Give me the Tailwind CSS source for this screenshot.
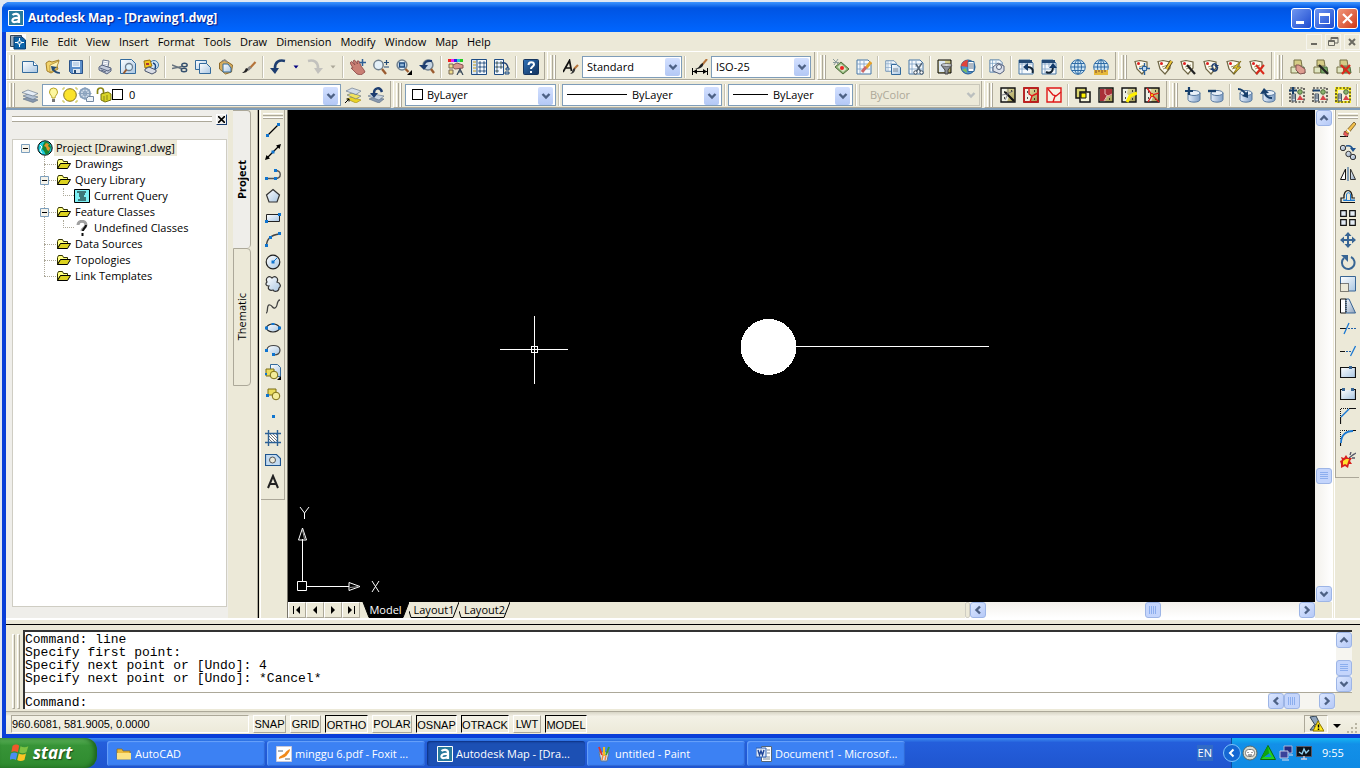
<!DOCTYPE html>
<html lang="en">
<head>
<meta charset="utf-8">
<title>Autodesk Map - [Drawing1.dwg]</title>
<script src="https://cdn.jsdelivr.net/npm/@tailwindcss/browser@4"></script>
</head>
<body class="h-screen overflow-hidden bg-[#ece9d8] font-['Open_Sans','Noto_Sans',sans-serif] text-[11px] leading-4 text-black">
<svg class="absolute size-0" aria-hidden="true">
<defs>
<linearGradient id="g" x1="0" y1="0" x2="1" y2="1"><stop offset="0" stop-color="#fff"/><stop offset="1" stop-color="#a9c6e2"/></linearGradient>
<linearGradient id="gs" x1="0" y1="0" x2="1" y2="1"><stop offset="0" stop-color="#f4f8fc"/><stop offset="1" stop-color="#8aa0bc"/></linearGradient>
<linearGradient id="gy" x1="0" y1="0" x2="1" y2="1"><stop offset="0" stop-color="#f5f0b8"/><stop offset="1" stop-color="#a09850"/></linearGradient>
<linearGradient id="gb" x1="0" y1="0" x2="1" y2="1"><stop offset="0" stop-color="#2f72b8"/><stop offset="1" stop-color="#12315c"/></linearGradient>
<linearGradient id="gdb" x1="0" y1="0" x2="1" y2="0"><stop offset="0" stop-color="#e4eefa"/><stop offset="1" stop-color="#7f9fc6"/></linearGradient>
</defs>
<symbol id="new" viewBox="0 0 16 16"><path d="M.5 2.500h11l4 4v7H.5z" fill="url(#g)" stroke="#336a9c"/><path d="M11.500 2.500v4h4" fill="#fff" stroke="#336a9c"/></symbol>
<symbol id="open" viewBox="0 0 16 16"><path d="M1 4l3-2 3 1 7-2-2 6 1 3-7 4-4-2z" fill="#f2d36a" stroke="#a6802a"/><path d="M5 6l9-4-3 8-6 3z" fill="#fff3b5" stroke="#a6802a" stroke-width=".7"/><path d="M8 9c1 4 3 5 7 5" stroke="#234a76" stroke-width="1.700" fill="none"/><path d="M6 7l6 1-5 4z" fill="#234a76"/></symbol>
<symbol id="save" viewBox="0 0 16 16"><path d="M1.500 1.500h13v13h-11l-2-2z" fill="#5c8fca" stroke="#2a5288"/><path d="M4 2h8v6H4z" fill="#e9f2fb"/><path d="M5 4h6M5 6h6" stroke="#9db8d6"/><path d="M5 10h7v4H5z" fill="#dce6f0"/><path d="M6 11h2v3H6z" fill="#234a76"/></symbol>
<symbol id="print" viewBox="0 0 16 16"><path d="M5 7l1-6 6 1-1 6z" fill="#fff" stroke="#66748e"/><path d="M2 8l3-2 9 3v3l-4 3-8-4z" fill="#c3cbdb" stroke="#56627e"/><path d="M3 9l8 3 3-2M4 11l5 2" stroke="#56627e" fill="none"/><path d="M6 3l5 1M6 5l5 1" stroke="#a7b2c6" stroke-width=".7"/></symbol>
<symbol id="preview" viewBox="0 0 16 16"><path d="M.5.500h11l4 4v10H.5z" fill="url(#g)" stroke="#336a9c"/><circle cx="9" cy="8" r="3.500" fill="#dff1fb" stroke="#6a7c90" stroke-width="1.300"/><path d="M6.500 10.500l-3 4" stroke="#9a5b2f" stroke-width="2"/></symbol>
<symbol id="publish" viewBox="0 0 16 16"><circle cx="11" cy="6" r="4.500" fill="#cfe5f4" stroke="#3c77a8"/><path d="M1 2l6-1 2 6-7 2z" fill="#f1c61e" stroke="#9a7411"/><path d="M3 4h3v2H3z" fill="#a33"/><path d="M2 10l4-2 7 3v2l-4 2-7-3z" fill="#d8dce4" stroke="#4a556d"/><path d="M10 4c3 1 3 3 2 6" stroke="#1a437c" fill="none" stroke-width="1.500"/></symbol>
<symbol id="cut" viewBox="0 0 16 16"><path d="M0 6l10 4M0 9.500l10-2" stroke="#66727e" stroke-width="1.400"/><ellipse cx="12.500" cy="6" rx="2.700" ry="1.800" fill="none" stroke="#35506e" stroke-width="1.400"/><ellipse cx="12" cy="11" rx="2.700" ry="1.800" fill="none" stroke="#35506e" stroke-width="1.400"/></symbol>
<symbol id="copy" viewBox="0 0 16 16"><path d="M.5 1.500h11v9H.5z" fill="url(#g)" stroke="#336a9c"/><path d="M4.500 4.500h7l4 4v6h-11z" fill="url(#g)" stroke="#336a9c"/></symbol>
<symbol id="paste" viewBox="0 0 16 16"><path d="M1.500 4l5-3 8 5-1 7-6 2-6-5z" fill="#d6ad5f" stroke="#906a27"/><path d="M5 5h5l3 4v4H5z" fill="url(#g)" stroke="#336a9c"/><path d="M4 2l3-1 2 2" stroke="#888" stroke-width="1.500" fill="none"/></symbol>
<symbol id="brush" viewBox="0 0 16 16"><path d="M14.500 3L9 9" stroke="#b57339" stroke-width="2.200"/><path d="M9.500 8l-3 3" stroke="#888" stroke-width="3"/><path d="M7 10c0 3-3 4-6 4 2-1 3-3 4-5z" fill="#222"/></symbol>
<symbol id="undo" viewBox="0 0 16 16"><path d="M15 2C9 .500 5 3 5 9" stroke="#1d3d70" stroke-width="2.600" fill="none"/><path d="M0 9h9l-4 6z" fill="#1d3d70"/></symbol>
<symbol id="redo" viewBox="0 0 16 16"><path d="M1 2c6-1.500 10 1 10 7" stroke="#c2c1bd" stroke-width="2.600" fill="none"/><path d="M7 9h9l-5 6z" fill="#c2c1bd"/></symbol>
<symbol id="dn" viewBox="0 0 16 16"><path d="M5.500 6.500h5l-2.500 3z" fill="#000080"/></symbol>
<symbol id="dng" viewBox="0 0 16 16"><path d="M5.500 6.500h5l-2.500 3z" fill="#aca899"/></symbol>
<symbol id="pan" viewBox="0 0 16 16"><path d="M0 4l1.500-1.500L5 6 3 2l1.500-1 3 4-.5-3 2 0 2 5 3 4 1 2-4 3-4-1-6-6 2 0z" fill="#c97f74" stroke="#844" stroke-width=".8"/><path d="M12.500 0v7M9.500 3.500h6.500" stroke="#2e5f96" stroke-width="1.500"/></symbol>
<symbol id="zoom" viewBox="0 0 16 16"><circle cx="5.500" cy="6" r="4.700" fill="#e4f0f8" stroke="#71808e" stroke-width="1.500"/><path d="M9 10l4 5" stroke="#9a5b2f" stroke-width="2.300"/><path d="M13.500 1v5M11 3.500h5M11 8h5" stroke="#234a76" stroke-width="1.200"/></symbol>
<symbol id="zoomw" viewBox="0 0 16 16"><circle cx="6" cy="6" r="4.900" fill="#e4f0f8" stroke="#71808e" stroke-width="1.500"/><path d="M3.500 4h5v4h-5z" fill="#8db4d8" stroke="#1c4a80" stroke-width="1.300"/><path d="M9.500 10l3 3" stroke="#9a5b2f" stroke-width="2.300"/><path d="M16 11v5h-5z"/></symbol>
<symbol id="zoomp" viewBox="0 0 16 16"><circle cx="9" cy="6" r="4.900" fill="#c7d6e4" stroke="#71808e" stroke-width="1.500"/><path d="M12 10l3 4" stroke="#9a5b2f" stroke-width="2.300"/><path d="M13 2c-6-1-8 2-8 5" stroke="#1d3d70" stroke-width="2.200" fill="none"/><path d="M0 6h9l-4 5z" fill="#1d3d70"/></symbol>
<symbol id="props" viewBox="0 0 16 16"><path d="M0 0h3v3H0z" fill="#e22"/><path d="M3 0h3v3H3z" fill="#e2e"/><path d="M6 0h3v3H6z" fill="#22e"/><path d="M9 0h3v3H9z" fill="#2cc"/><path d="M12 0h3v3h-3z" fill="#2c2"/><path d="M3 7l6-3 6 2v3l-8 1z" fill="#d9988c" stroke="#855"/><path d="M1 5h4v4H1zM1 11h4v4H1z" fill="#eedc8c" stroke="#765"/><path d="M9 16l3-6 3 6M10 13h4" stroke="#345" stroke-width="1.200" fill="none"/></symbol>
<symbol id="dc" viewBox="0 0 16 16"><path d="M.5.500h15v15H.5z" fill="#f4f8fc" stroke="#1e4c84"/><path d="M1 1h5v14H1z" fill="#dbe7f3"/><path d="M6 1v14" stroke="#1e4c84"/><path d="M2 3h3M2 6h3M2 9h3M2 12h3" stroke="#c79c1a"/><path d="M8 3h2v2H8zM12 3h2v2h-2zM8 7h2v2H8zM12 7h2v2h-2zM8 11h2v2H8zM12 11h2v2h-2z" fill="#bcd3ea" stroke="#234a76" stroke-width=".8"/></symbol>
<symbol id="tp" viewBox="0 0 16 16"><path d="M.5.500h9v15h-9z" fill="#f4f8fc" stroke="#1e4c84"/><path d="M2 3h2v2H2zM2 7h2v2H2zM2 11h2v2H2zM6 3h2v2H6zM6 7h2v2H6z" fill="#e8dc8a" stroke="#234a76" stroke-width=".8"/><path d="M8 4c4-1 6 2 6 6" stroke="#1d3d70" stroke-width="1.500" fill="none"/><path d="M12 9h3v2h-3zM11 13h4v2h-4z" fill="#bcd3ea" stroke="#234a76"/></symbol>
<symbol id="help" viewBox="0 0 16 16"><rect x=".5" y=".5" width="15" height="15" rx="1" fill="url(#gb)" stroke="#16355e"/><path d="M5.500 6c0-4 5.500-3.500 5.500-.5 0 2-3 2-3 4.500M8 12v2" stroke="#fff" stroke-width="2" fill="none"/></symbol>
<symbol id="tstyle" viewBox="0 0 16 16"><path d="M0 13L6.500 1.500l2 10.500M2.500 9H8" stroke="#111" stroke-width="1.700" fill="none"/><path d="M15 6l-4 4" stroke="#b57339" stroke-width="2.200"/><path d="M12 9c1 3-2 6-5 6 2-1 2-3 3-5z" fill="#333"/></symbol>
<symbol id="dstyle" viewBox="0 0 16 16"><path d="M.5 9v7M15.500 9v7M1 12.500h14" stroke="#000"/><path d="M1 12.500l4-2.500v5zM15 12.500l-4-2.500v5z"/><path d="M15 0l-5 6" stroke="#b57339" stroke-width="2"/><path d="M11 4c1 4-3 6-8 6 4-1 4-3 6-5z" fill="#222"/></symbol>
<symbol id="layers" viewBox="0 0 16 16"><path d="M1 12l5-2 10 3-5 2.500z" fill="#8798ae" stroke="#5b6b83" stroke-width=".6"/><path d="M1 9l5-2 10 3-5 2.500z" fill="#b6c5d6" stroke="#5b6b83" stroke-width=".6"/><path d="M0 5.500L6 3l10 3.500L11 9z" fill="#e5edf5" stroke="#5b6b83" stroke-width=".6"/></symbol>
<symbol id="laycur" viewBox="0 0 16 16"><path d="M2 12l5-2 9 3-5 3z" fill="#ead326" stroke="#9d8712" stroke-width=".6"/><path d="M2 8l5-2 9 3-5 3z" fill="#f0e260" stroke="#5b6b83" stroke-width=".6"/><path d="M1 4l6-3 9 3-5 3.500z" fill="#d3dde9" stroke="#5b6b83" stroke-width=".6"/><path d="M0 16l4-4M1.500 12H4v2.500" stroke="#000" fill="none"/></symbol>
<symbol id="layprev" viewBox="0 0 16 16"><path d="M1 12l5-2 10 2-5 4z" fill="#8798ae" stroke="#5b6b83" stroke-width=".6"/><path d="M0 9l5-2 11 2-5 4z" fill="#c9d5e2" stroke="#5b6b83" stroke-width=".6"/><path d="M14 5c-2-6-8-4-8 1" stroke="#1d3d70" stroke-width="2.400" fill="none"/><path d="M2 6h8l-4 5z" fill="#1d3d70"/></symbol>
<symbol id="bulb" viewBox="0 0 16 16"><path d="M6 11c0-3-2.500-3-2.500-6a4 4 0 018 0c0 3-2.500 3-2.500 6z" fill="#fdf7a0" stroke="#b7a425"/><path d="M6 12h3v3H6z" fill="#777"/></symbol>
<symbol id="sun" viewBox="0 0 16 16"><path d="M1 1h2M13 1h2M1 15h2M13 15h2M1 1v2M15 1v2M1 13v2M15 13v2" stroke="#c7c04a"/><circle cx="8" cy="8" r="6.300" fill="#fbe32c" stroke="#87731f"/></symbol>
<symbol id="vp" viewBox="0 0 16 16"><circle cx="7" cy="6.500" r="5" fill="#d4dfec" stroke="#8aa2bd" stroke-width="2"/><circle cx="7" cy="6.500" r="2" fill="none" stroke="#8aa2bd"/><path d="M7 0v13M.5 6.500h13M2.500 2l9 9M11.500 2l-9 9" stroke="#8aa2bd"/><path d="M10.500 9.500h5v5h-7v-3z" fill="#eef3f8" stroke="#7288a2"/></symbol>
<symbol id="lock" viewBox="0 0 16 16"><path d="M1.500 7V4c0-4 6-4 6 0v4" stroke="#8b8714" stroke-width="1.700" fill="none"/><path d="M5 7l7-2 3 2v6l-6 2-4-2z" fill="#d8d428" stroke="#77740d"/><path d="M8 9v5M11 8v5" stroke="#8b8714"/></symbol>
<!-- map sheet tools -->
<symbol id="sheet" viewBox="0 0 16 16"><path d="M1 1h11l3 3v11H1z" fill="#f6fafd" stroke="#4776a6"/><path d="M4 1v14M1 5h13M1 10h13M8 2v6" stroke="#7ba0c4" stroke-width=".8"/></symbol>
<symbol id="m1" viewBox="0 0 16 16"><path d="M2 8l6-5 8 7-6 5z" fill="#8fb579" stroke="#4d6b3b"/><path d="M4.500 8L8 5l5.500 5-3.500 3z" fill="#dce8c6"/><circle cx="9" cy="9" r="2" fill="#e22"/><path d="M0 0l5 5M5 0L1 6M0 3.500h6" stroke="#8a9a9a"/></symbol>
<symbol id="m2" viewBox="0 0 16 16"><use href="#sheet"/><path d="M15 3l-5 6" stroke="#e3a12b" stroke-width="3"/><path d="M10 8l-4 5" stroke="#c66" stroke-width="3"/></symbol>
<symbol id="m3" viewBox="0 0 16 16"><use href="#sheet" width="12" height="14"/><path d="M6.500 5.500h5l4 3v7h-9z" fill="url(#g)" stroke="#336a9c"/><path d="M8 10h5M8 12h5" stroke="#789"/></symbol>
<symbol id="m4" viewBox="0 0 16 16"><use href="#sheet"/><path d="M8 5l5 8M14 4L8 13" stroke="#567" stroke-width="1.500"/><circle cx="7.500" cy="13.500" r="1.700" fill="#fff" stroke="#345"/><circle cx="13.500" cy="13.500" r="1.700" fill="#fff" stroke="#345"/></symbol>
<symbol id="m5" viewBox="0 0 16 16"><path d="M1 1h13v13H1z" fill="url(#gy)" stroke="#000"/><path d="M2 2h6v11H2z" fill="#dce8f4"/><path d="M4 6h11l-4 5v4H8v-4z" fill="#8b9098" stroke="#444"/><ellipse cx="9.500" cy="6" rx="5" ry="1.500" fill="#d4d8de" stroke="#444" stroke-width=".7"/></symbol>
<symbol id="m6" viewBox="0 0 16 16"><circle cx="8" cy="8" r="7" fill="#4d93cf" stroke="#25588f"/><path d="M8 1a7 7 0 00-7 6l7 1z" fill="#e2423a"/><path d="M2 11l4-2 1 5z" fill="#7cbd5a"/><path d="M8 2.500h6v10H8z" fill="#fff" stroke="#336a9c"/><path d="M9 5h4M9 7h4M9 9h4" stroke="#678"/></symbol>
<symbol id="m7" viewBox="0 0 16 16"><use href="#sheet" width="14" height="14"/><path d="M4 8l5-4 6 3v5l-4 3-7-3z" fill="#dce1ea" stroke="#56627e"/><circle cx="10" cy="8" r="2.500" fill="#eef3f8" stroke="#56627e"/></symbol>
<symbol id="m8" viewBox="0 0 16 16"><use href="#sheet"/><path d="M1 1h13v3H1z" fill="#234a76"/><path d="M14.500 14c1-4-1-6-5-6" stroke="#123" stroke-width="2" fill="none"/><path d="M10 4v8L5 8z" fill="#123a6a"/></symbol>
<symbol id="m9" viewBox="0 0 16 16"><use href="#sheet"/><path d="M1 1h13v3H1z" fill="#234a76"/><path d="M5 13c4 2 7 0 7-5" stroke="#123" stroke-width="2" fill="none"/><path d="M8 9h8l-4-5z" fill="#123a6a"/></symbol>
<symbol id="globe" viewBox="0 0 16 16"><circle cx="8" cy="8" r="7.300" fill="#cfe6f4" stroke="#2e6ca6"/><ellipse cx="8" cy="8" rx="3.500" ry="7" fill="none" stroke="#2e6ca6"/><path d="M8 1v14M1 8h14M2 4.500h12M2 11.500h12" stroke="#2e6ca6"/></symbol>
<symbol id="globe2" viewBox="0 0 16 16"><use href="#globe"/><path d="M1 11h14v5H1z" fill="#e6b93b"/><path d="M3 11v3M6 11v2M9 11v3M12 11v2" stroke="#743"/></symbol>
<symbol id="tag" viewBox="0 0 16 16"><path d="M1 2.500l5-1 7 1.500v6l-5 6-5-5z" fill="#fdfbee" stroke="#6d6544" stroke-width="1.200"/><circle cx="4.500" cy="4.500" r="1.500" fill="#e02020"/><path d="M5 8l6-2M6 10l5-2" stroke="#9d9670"/></symbol>
<symbol id="t1" viewBox="0 0 16 16"><use href="#tag"/><path d="M10.500 4v12M5 9.500h11" stroke="#2a629c" stroke-width="1.400"/><path d="M8.500 7.500h4v4h-4z" fill="#bcd7ef" stroke="#2a629c"/></symbol>
<symbol id="t2" viewBox="0 0 16 16"><use href="#tag"/><path d="M14.500 2l-5 8" stroke="#493b16" stroke-width="3.500"/><path d="M14.500 2l-5 8" stroke="#ecc63a" stroke-width="2"/></symbol>
<symbol id="t3" viewBox="0 0 16 16"><use href="#tag"/><path d="M7 6l8 9" stroke="#222" stroke-width="2.200"/></symbol>
<symbol id="t4" viewBox="0 0 16 16"><use href="#tag"/><path d="M9 8c0-4 4.500-4 4.500-1M14.500 8c0 5-5 5-5 2" stroke="#1d3d70" stroke-width="1.500" fill="none"/><path d="M11 6h5l-2.500 3zM7 11h5L9.500 8z" fill="#1d3d70"/></symbol>
<symbol id="t5" viewBox="0 0 16 16"><use href="#tag"/><path d="M15 2L7 9h4l-4 6 8-7h-4z" fill="#f7d730" stroke="#7c6a12" stroke-width=".8"/></symbol>
<symbol id="t6" viewBox="0 0 16 16"><use href="#tag"/><path d="M7 6l8 9M15 6l-8 9" stroke="#da2a1c" stroke-width="2"/></symbol>
<symbol id="cls" viewBox="0 0 16 16"><path d="M4 1h7l1 6H4z" fill="#d5cc86" stroke="#777044"/><path d="M1 8h6.500v6H1z" fill="#dfe5c0" stroke="#777044"/><path d="M8 8h6l1 6H8z" fill="#78a867" stroke="#4d6b3b"/></symbol>
<symbol id="c1" viewBox="0 0 16 16"><use href="#cls"/><path d="M6 6h3l6 4v4l-5 1-4-4z" fill="#dd9d90" stroke="#855"/></symbol>
<symbol id="c2" viewBox="0 0 16 16"><use href="#cls"/><path d="M6 6l9 9" stroke="#222" stroke-width="2.200"/></symbol>
<symbol id="c3" viewBox="0 0 16 16"><use href="#cls"/><path d="M5 6l9 9M14 6l-8 9" stroke="#da2a1c" stroke-width="2.200"/></symbol>
<!-- topology tools -->
<symbol id="tb" viewBox="0 0 16 16"><path d="M1 1h14v14H1z" fill="url(#gy)"/><path d="M1 1h6l-1 6 3 2-2 6H1z" fill="#eef0e4"/><path d="M1 1h14v14H1z" fill="none" stroke="#111" stroke-width="1.400"/><path d="M4 5h1M11 4h1M11 12h1M4 11h1" stroke="#111" stroke-width="1.500"/></symbol>
<symbol id="p1" viewBox="0 0 16 16"><use href="#tb"/><path d="M5 5l9 9" stroke="#111" stroke-width="2.200"/><path d="M2 8l5-1 6-3M8 2v5l-3 6" stroke="#667" stroke-width=".8" fill="none"/></symbol>
<symbol id="p2" viewBox="0 0 16 16"><use href="#tb"/><path d="M1 1h14v14H1z" fill="none" stroke="#e01818" stroke-width="1.400"/><path d="M6 1v6l3 2 6-3M9 9l-2 6" stroke="#e01818" stroke-width="1.400" fill="none"/></symbol>
<symbol id="p3" viewBox="0 0 16 16"><path d="M1 1h14v14H1z" fill="#f6f2e4" stroke="#e01818" stroke-width="1.400"/><path d="M2 2l5 6 3 1 5-4M9 9l-2 6" stroke="#e01818" stroke-width="1.400" fill="none"/></symbol>
<symbol id="p4" viewBox="0 0 16 16"><path d="M1 1h10v10H1z" fill="#d9d46c" stroke="#111" stroke-width="1.500"/><path d="M5 5h10v10H5z" fill="#f7f5d9" stroke="#111" stroke-width="1.500"/><path d="M6 6h5v5H6z" fill="#fff200" stroke="#111"/></symbol>
<symbol id="p5" viewBox="0 0 16 16"><use href="#tb"/><path d="M2 2h12v6L9 9l-2 5H2z" fill="#a93038"/><path d="M7 2v5l3 2 4-2M9 9l-3 5" stroke="#e8b8b8" fill="none"/></symbol>
<symbol id="p6" viewBox="0 0 16 16"><use href="#tb"/><path d="M6 15l3-6 7-3" stroke="#ffef00" stroke-width="3" fill="none"/></symbol>
<symbol id="p7" viewBox="0 0 16 16"><use href="#tb"/><path d="M3 1l5 7 7-2M8 8l-4 7M8 8l7 7" stroke="#e01818" stroke-width="1.300" fill="none"/><circle cx="8" cy="8" r="1.500" fill="#ff0" stroke="#e01818"/></symbol>
<symbol id="db" viewBox="0 0 16 16"><path d="M3 6v6.500c0 3.500 12 3.500 12 0V6z" fill="url(#gdb)" stroke="#56789f"/><ellipse cx="9" cy="6" rx="6" ry="2.500" fill="#e9f1f9" stroke="#56789f"/></symbol>
<symbol id="d1" viewBox="0 0 16 16"><use href="#db"/><path d="M4 0v8M0 4h8" stroke="#173f6c" stroke-width="2.200"/></symbol>
<symbol id="d2" viewBox="0 0 16 16"><use href="#db"/><path d="M0 4h8" stroke="#173f6c" stroke-width="2.400"/></symbol>
<symbol id="d3" viewBox="0 0 16 16"><use href="#db"/><path d="M1 2c4 0 6 2 8 6" stroke="#173f6c" stroke-width="2" fill="none"/><path d="M5 9l6-5v7z" fill="#173f6c"/></symbol>
<symbol id="d4" viewBox="0 0 16 16"><use href="#db"/><path d="M12 11c-4 0-6-1-7-5" stroke="#173f6c" stroke-width="2" fill="none"/><path d="M0 7l4-6 5 5z" fill="#173f6c"/></symbol>
<symbol id="sel" viewBox="0 0 16 16"><path d="M1 1h14v14H1z" fill="none" stroke="#111" stroke-width="1.200" stroke-dasharray="2 1.500"/><circle cx="11" cy="5" r="2.300" fill="#8ab56f" stroke="#4d6b3b"/><path d="M8 13l3-5 3.500 5z" fill="#d8444a"/><path d="M3 7h3.500v7H3z" fill="#cfd9e4" stroke="#456"/><path d="M3 9h3M3 11h3" stroke="#456"/></symbol>
<symbol id="s1" viewBox="0 0 16 16"><use href="#sel"/><path d="M4 0v7M0 3.500h8" stroke="#173f6c" stroke-width="2"/></symbol>
<symbol id="s2" viewBox="0 0 16 16"><use href="#sel"/><path d="M1 3.500h7" stroke="#173f6c" stroke-width="2"/></symbol>
<symbol id="s3" viewBox="0 0 16 16"><path d="M0 0h16v16H0z" fill="#fff12a"/><path d="M3 3h11v11H3z" fill="#f4f0d8"/><use href="#sel"/></symbol>
<!-- draw tools -->
<symbol id="w1" viewBox="0 0 16 16"><path d="M2.500 13.500l11-11" stroke="#000" stroke-width="1.200"/><path d="M1 12h3v3H1zM12 1h3v3h-3z" fill="#0f75d0"/></symbol>
<symbol id="w2" viewBox="0 0 16 16"><path d="M1.500 14.500l13-13" stroke="#000" stroke-width="1.200"/><path d="M0 16l1.500-5 3.500 3.500zM16 0l-1.500 5L11 1.500z"/><path d="M6.500 6.500h3v3h-3z" fill="#0f75d0"/></symbol>
<symbol id="w3" viewBox="0 0 16 16"><path d="M1 12.500h9M10 12.500c7 0 7-8 0-8" stroke="#555" stroke-width="1.400" fill="none"/><path d="M0 11h3v3H0zM9 11h3v3H9zM9 3h3v3H9z" fill="#0f75d0"/></symbol>
<symbol id="w4" viewBox="0 0 16 16"><path d="M8 1.500L14.500 7 12 14H4L1.500 7z" fill="url(#g)" stroke="#333" stroke-width="1.200"/></symbol>
<symbol id="w5" viewBox="0 0 16 16"><path d="M1.500 4.500h13v7h-13z" fill="url(#g)" stroke="#222"/><path d="M0 10h3v3H0zM13 3h3v3h-3z" fill="#0f75d0"/></symbol>
<symbol id="w6" viewBox="0 0 16 16"><path d="M1.500 14c0-6 4-11 13-12" stroke="#444" stroke-width="1.400" fill="none"/><path d="M0 12h3v3H0zM4 4h3v3H4zM13 0h3v3h-3z" fill="#0f75d0"/></symbol>
<symbol id="w7" viewBox="0 0 16 16"><circle cx="8" cy="8" r="6.800" fill="url(#g)" stroke="#222" stroke-width="1.200"/><path d="M8 8l4-4" stroke="#0f75d0"/><path d="M6.500 6.500h3v3h-3z" fill="#0f75d0"/></symbol>
<symbol id="w8" viewBox="0 0 16 16"><path d="M2 6C0 2 4-1 7 2c3-3 7 0 5 4 4 1 4 5 2 6 0 4-5 4-6 2-3 1-6-1-4-4-3 0-4-2-2-4z" fill="url(#g)" stroke="#333" stroke-width="1.200"/></symbol>
<symbol id="w9" viewBox="0 0 16 16"><path d="M1 15c2 0 1-5 2-7s3-1 4.500 1 4 1 4.500-2 1-5 3-5" stroke="#444" stroke-width="1.300" fill="none"/></symbol>
<symbol id="w10" viewBox="0 0 16 16"><ellipse cx="8" cy="8" rx="6.500" ry="4" fill="url(#g)" stroke="#222" stroke-width="1.200"/><path d="M0 6.500h3v3H0zM13 6.500h3v3h-3zM6.500 3h3v2h-3z" fill="#0f75d0"/></symbol>
<symbol id="w11" viewBox="0 0 16 16"><path d="M2 8c0-6 13-6 13 0 0 3-2 5-6 5" fill="url(#g)" stroke="#444" stroke-width="1.200"/><path d="M0 7h3v3H0zM7 11h3v3H7z" fill="#0f75d0"/></symbol>
<symbol id="w12" viewBox="0 0 16 16"><path d="M5.500.500h7l3 3v9h-10z" fill="url(#g)" stroke="#336a9c"/><path d="M1 5h8v7H1z" fill="#eadb5c" stroke="#7a6c14"/><circle cx="9" cy="11" r="3.800" fill="#f4ec9a" stroke="#7a6c14"/><path d="M0 9h2v2H0z" fill="#0f75d0"/><path d="M16 12v4h-4z"/></symbol>
<symbol id="w13" viewBox="0 0 16 16"><path d="M3 3h8v6H3z" fill="#eadb5c" stroke="#7a6c14"/><circle cx="11" cy="10" r="3.800" fill="#f4ec9a" stroke="#7a6c14"/><path d="M1 8h3v3H1z" fill="#0f75d0"/></symbol>
<symbol id="w14" viewBox="0 0 16 16"><path d="M7 7h3v3H7z" fill="#0f75d0"/></symbol>
<symbol id="w15" viewBox="0 0 16 16"><path d="M4 4h9v9H4z" fill="#fff"/><path d="M4 9l4 4M4 6l7 7M5 4l8 8M8 4l5 5M11 4l2 2" stroke="#555" stroke-width=".8"/><path d="M0 3.500h16M0 12.500h16M3.500 0v16M12.500 0v16" stroke="#2b6096" stroke-width="1.400"/></symbol>
<symbol id="w16" viewBox="0 0 16 16"><path d="M.5 2.500h11l4 4v7H.5z" fill="#c4dbf0" stroke="#1e5590" stroke-width="1.200"/><circle cx="7.500" cy="8" r="3" fill="#ece9d8" stroke="#555"/></symbol>
<symbol id="w17" viewBox="0 0 16 16"><path d="M3 14L8 2l5 12M5 10h6" stroke="#222" stroke-width="2" fill="none"/></symbol>
<!-- modify tools -->
<symbol id="e1" viewBox="0 0 16 16"><path d="M0 14.500h8" stroke="#111"/><path d="M5 10l9-10 2 2-8 10z" fill="#f3c04c" stroke="#6b5020" stroke-width=".8"/><path d="M4.500 9l4 4-2 1.500-3-2z" fill="#ef5b5b" stroke="#733" stroke-width=".6"/><path d="M7 7.500l3 3" stroke="#fff" stroke-width="1.500"/></symbol>
<symbol id="e2" viewBox="0 0 16 16"><circle cx="3" cy="4" r="2.700" fill="url(#gs)" stroke="#333"/><circle cx="8.500" cy="10" r="2.700" fill="url(#gs)" stroke="#333"/><circle cx="13" cy="13" r="2.700" fill="url(#gs)" stroke="#333"/><path d="M6 2c4-1 6 0 7 4" stroke="#1f5490" stroke-width="1.600" fill="none"/><path d="M10 4h6l-3 4z" fill="#1f5490"/></symbol>
<symbol id="e3" viewBox="0 0 16 16"><path d="M5.500 3v10.500H.5z" fill="#fff" stroke="#111"/><path d="M10.500 3v10.500h5z" fill="url(#gs)" stroke="#333"/><path d="M8 1v14" stroke="#1f5490"/></symbol>
<symbol id="e4" viewBox="0 0 16 16"><path d="M15 14.500H1V10h3c-1-10 9-10 8 0h3" fill="none" stroke="#111" stroke-width="1.200"/><path d="M15 12.500H3.500M15 12h-4.500V7c0-3-4-3-4 0v5H3" stroke="#1a78d2" fill="none"/></symbol>
<symbol id="e5" viewBox="0 0 16 16"><path d="M.7.700h5.600v5.600H.7zM9.700.700h5.600v5.600H9.700zM.7 9.700h5.600v5.600H.7zM9.700 9.700h5.600v5.600H9.700z" fill="#e3ebf4" stroke="#111" stroke-width="1.200"/></symbol>
<symbol id="e6" viewBox="0 0 16 16"><path d="M8 1v14M1 8h14" stroke="#386594" stroke-width="2"/><path d="M8 0l3.500 4h-7zM8 16l3.500-4h-7zM0 8l4-3.500v7zM16 8l-4-3.500v7z" fill="#386594"/></symbol>
<symbol id="e7" viewBox="0 0 16 16"><path d="M4 4a6.300 6.300 0 107-1" stroke="#386594" stroke-width="2" fill="none"/><path d="M1 1h7v7z" fill="#386594"/></symbol>
<symbol id="e8" viewBox="0 0 16 16"><path d="M1 .500h14.500V15H1z" fill="url(#g)"/><path d="M.5 8V.500h15V15H9" fill="none" stroke="#386594"/><path d="M.5 7.500h8v8h-8z" fill="#ece9d8" stroke="#111" stroke-dasharray="1 1"/></symbol>
<symbol id="e9" viewBox="0 0 16 16"><path d="M.5 1v14H6V1z" fill="#fff" stroke="#111"/><path d="M6 1v14h9.500L9 1z" fill="url(#gs)" stroke="#386594"/><path d="M6 1v14" stroke="#111" stroke-dasharray="1 1"/></symbol>
<symbol id="e10" viewBox="0 0 16 16"><path d="M0 8.500h6" stroke="#111"/><path d="M8 8.500h8" stroke="#1f60a8" stroke-dasharray="2 1"/><path d="M4 14l5-11" stroke="#1a78d2" stroke-width="1.300"/></symbol>
<symbol id="e11" viewBox="0 0 16 16"><path d="M0 9.500h5" stroke="#111"/><path d="M6 9.500h6" stroke="#1f60a8" stroke-dasharray="2 1"/><path d="M10.500 14l5-10" stroke="#1a78d2" stroke-width="1.300"/></symbol>
<symbol id="e12" viewBox="0 0 16 16"><path d="M.5 3.500h15v10H.5z" fill="url(#g)" stroke="#111" stroke-width="1.200"/><path d="M9 2h3v3H9z" fill="#386594"/></symbol>
<symbol id="e13" viewBox="0 0 16 16"><path d="M1 4h14v9H1z" fill="url(#g)"/><path d="M4 3.500H.5v10h15v-10H12" fill="none" stroke="#111" stroke-width="1.200"/><path d="M2 2h3v3H2zM11 2h3v3h-3z" fill="#386594"/></symbol>
<symbol id="e14" viewBox="0 0 16 16"><path d="M.5 16V9M9 .500h7" stroke="#111" stroke-width="1.200"/><path d="M.5 8V.500h8" stroke="#111" stroke-dasharray="1 1" fill="none"/><path d="M1 9l8-8" stroke="#1a78d2" stroke-width="1.500"/></symbol>
<symbol id="e15" viewBox="0 0 16 16"><path d="M.5 16v-3M12 .500h4" stroke="#111" stroke-width="1.200"/><path d="M.5 9V.500h8" stroke="#111" stroke-dasharray="1 1" fill="none"/><path d="M1 13C1 6 5 1 13 1" stroke="#1a78d2" stroke-width="1.800" fill="none"/></symbol>
<symbol id="e16" viewBox="0 0 16 16"><path d="M1 5l3 1 2-3 2 3 4 0-2 3 2 3-3 0-1 4-3-2-4 2 0-4-1-3 2-1z" fill="#d8201c"/><path d="M3 9l3-2 3 0-1 3-1 3-2-1-2 1z" fill="#ffe12e"/><path d="M9 6l5-4M12 6l3 0M10 3l1-3M13 3l3-2" stroke="#556" stroke-width="1.300"/></symbol>
<!-- tree, task bar and tray glyphs -->
<symbol id="folder" viewBox="0 0 15 12"><path d="M1.500 10.500v-7l1-2h4l1 2h4v2h-7z" fill="#ffff80" stroke="#333300"/><path d="M1.500 10.500l3-5h10l-3 5z" fill="#dcd220" stroke="#000"/></symbol>
<symbol id="world" viewBox="0 0 16 16"><circle cx="8" cy="8" r="7.200" fill="#1ccad8" stroke="#000"/><path d="M8 1l4 2 2 4-2 6-3 2-2-4-2-2 1-4z" fill="#1a8430"/><path d="M9 3l3 1-1 2 2 2-1 3-2-1-1-3-2-1z" fill="#e0942a"/><path d="M3 5l2 2-2 3 2 3" stroke="#fff" fill="none"/></symbol>
<symbol id="query" viewBox="0 0 16 14"><path d="M.5.500h15v13H.5z" fill="#7df0f5" stroke="#000"/><path d="M3 3h4M5 5h6M7 3h5M5 7h5M6 9h6M4 11h8" stroke="#000"/></symbol>
<symbol id="alogo" viewBox="0 0 16 16"><path d="M.5.500h15v15H.5z" fill="#287a9c" stroke="#fff"/><path d="M4.500 5c2-2 6.500-1.500 6.500 1.500V13M11 8C3 7 3 12.500 7 12c2 0 4-1 4-3" stroke="#fff" stroke-width="2.200" fill="none"/></symbol>
<symbol id="docicon" viewBox="0 0 16 16"><path d="M.5 1.500h11v11H.5z" fill="#9ab" stroke="#345"/><path d="M4 3h8l3.500 3v9H4z" fill="#0b63a8" stroke="#0a3c6e"/><path d="M9.500 4v9M5 8.500h9" stroke="#fff"/><path d="M8 7h3v3H8z" fill="#0b63a8" stroke="#fff" stroke-width=".8"/></symbol>
<symbol id="flag" viewBox="1 1 14.500 14"><path d="M3 2c2-1.500 4-1 5 0L7 7C5 6 3.500 6 2 7z" fill="#f0582b"/><path d="M9 2.500c2 1 4 1 6 0L13.500 7c-2 1-4 1-5.500 0z" fill="#7dc242"/><path d="M1.700 8C3.500 7 5 7 6.700 8L5.500 13c-1.500-1-3.500-1-5 0z" fill="#4a8df0"/><path d="M7.700 8c2 1 4 1 5.500 0L12 13c-2 1-4 1-5.500 0z" fill="#fbc524"/></symbol>
<symbol id="yfold" viewBox="0 0 16 16"><path d="M1 13V3h5l1 2h7v8z" fill="#e9b93b" stroke="#8a6914" stroke-width=".7"/><path d="M1 7h14v6.500H1z" fill="#fbe384"/></symbol>
<symbol id="foxit" viewBox="0 0 16 16"><path d="M.5.500h15v15H.5z" fill="#fff" stroke="#c8c8d8"/><path d="M3 13c-1-3 5-4 6-6s3-3 5-4c0 3-2 4-3 6s-5 3-8 4z" fill="#f08a1c"/><path d="M2 5h5M9 13h5" stroke="#567"/></symbol>
<symbol id="paint" viewBox="0 0 16 16"><path d="M3 6h10l-2 9H5z" fill="#dbe6f2" stroke="#678"/><path d="M6 9L3 1" stroke="#d33" stroke-width="2"/><path d="M8 10V1" stroke="#f0c020" stroke-width="2"/><path d="M10 9l3-8" stroke="#3a9b3a" stroke-width="2"/><path d="M6 14l1-5M9 14l1-5" stroke="#e84" stroke-width="1.500"/></symbol>
<symbol id="word" viewBox="0 0 16 16"><path d="M5.500.500h10v15h-10z" fill="#fff" stroke="#567"/><path d="M11 4h3M11 7h3M7 11h7M7 13h7" stroke="#789"/><path d="M0 2h10v9H0z" fill="#dfe9f8" stroke="#2a5fb4"/><path d="M2 4l1.500 5L5 5l1.500 4L8 4" stroke="#1c4498" stroke-width="1.400" fill="none"/></symbol>
<symbol id="y1" viewBox="0 0 16 16"><circle cx="8" cy="8" r="7" fill="#d8dcd0" stroke="#566"/><rect x="3.500" y="4.500" width="9" height="7" rx="3" fill="#fff" stroke="#777"/><path d="M6 7v1M10 7v1M6 10h4" stroke="#444"/></symbol>
<symbol id="y2" viewBox="0 0 16 16"><path d="M8 .5l7.500 14H.5z" fill="#22d022" stroke="#0b6a0b"/><path d="M8 6l3.500 6h-7z" fill="#0c8fd8"/><path d="M8 .5l1 8-8.500 6z" fill="#0ea30e"/></symbol>
<symbol id="y3" viewBox="0 0 16 16"><path d="M6 1h8v7H6z" fill="#232a80" stroke="#aab4d8"/><path d="M2 6h8v7H2z" fill="#39429a" stroke="#c2cae6"/><path d="M4 15h7M11 10h4" stroke="#dde"/></symbol>
<symbol id="y4" viewBox="0 0 16 16"><path d="M.5 1.500h15v10H.5z" fill="#0c1218" stroke="#556"/><path d="M3 7l3 2 2-5 2 4 3-3" stroke="#8fd0f0" stroke-width="1.400" fill="none"/><path d="M5 14h6M8 11v3" stroke="#ccd" stroke-width="1.500"/></symbol>
<symbol id="chevD" viewBox="0 0 16 16"><path d="M4.500 6L8 9.500 11.500 6" stroke="#4d6185" stroke-width="2.400" fill="none"/></symbol>
<symbol id="chevU" viewBox="0 0 16 16"><path d="M4.500 10L8 6.500l3.500 3.500" stroke="#4d6185" stroke-width="2.400" fill="none"/></symbol>
<symbol id="chevL" viewBox="0 0 16 16"><path d="M10 4.500L6.500 8l3.500 3.500" stroke="#4d6185" stroke-width="2.400" fill="none"/></symbol>
<symbol id="chevR" viewBox="0 0 16 16"><path d="M6 4.500L9.500 8 6 11.500" stroke="#4d6185" stroke-width="2.400" fill="none"/></symbol>
</svg>

<div class="flex h-full flex-col">
  <div class="flex min-h-0 flex-1 flex-col bg-[#dfe6f2] pt-[2px] pl-[2px]">
    <div class="flex min-h-0 flex-1 flex-col rounded-tl-lg bg-[#0a3fd8] pb-[4px]">
      <!-- title bar -->
      <header class="flex h-[30px] shrink-0 items-center rounded-tl-lg bg-linear-to-b from-[#3d95ff] via-[#0054e3] via-20% to-[#0066ff] pt-[2px] pr-[2px] pl-[6px]">
        <svg class="size-4"><use href="#alogo"/></svg>
        <h1 class="ml-1 flex-1 text-[12px] font-bold text-white [text-shadow:1px_1px_1px_#0a1883]">Autodesk Map - [Drawing1.dwg]</h1>
        <div class="flex gap-[2px]">
          <button aria-label="Minimize" class="flex size-[21px] items-end rounded-[3px] border border-white bg-linear-to-br from-[#6f95f0] to-[#1f49cf] p-1"><span class="block h-[3px] w-2 bg-white"></span></button>
          <button aria-label="Maximize" class="flex size-[21px] items-center justify-center rounded-[3px] border border-white bg-linear-to-br from-[#6f95f0] to-[#1f49cf]"><span class="block size-[11px] border border-t-[3px] border-white"></span></button>
          <button aria-label="Close" class="flex size-[21px] items-center justify-center rounded-[3px] border border-white bg-linear-to-br from-[#f0967a] to-[#cf3510]"><svg class="size-[13px]" viewBox="0 0 13 13"><path d="M2 2l9 9M11 2l-9 9" stroke="#fff" stroke-width="2.200"/></svg></button>
        </div>
      </header>

      <div class="ml-[4px] flex min-h-0 flex-1 flex-col bg-[#ece9d8]">
        <!-- menu -->
        <nav class="flex h-[20px] shrink-0 items-center border-b border-white pl-1" aria-label="Menu">
          <svg class="size-4 bg-white"><use href="#docicon"/></svg>
          <div id="menu" class="ml-[5px] flex flex-1"></div>
          <div class="flex gap-[3px]">
            <button aria-label="Minimize drawing" class="flex size-4 items-end border border-[#f6f5ee] p-1"><span class="block h-[2px] w-[6px] bg-[#6b6a62]"></span></button>
            <button aria-label="Restore drawing" class="flex size-4 items-center justify-center border border-[#f6f5ee]"><svg class="size-3" viewBox="0 0 12 12"><path d="M4 4V1.500h7V7H8M1.500 4.500h6v5h-6zM1.500 5.500h6M4 2.500h7" fill="none" stroke="#6b6a62"/></svg></button>
            <button aria-label="Close drawing" class="flex size-4 items-center justify-center border border-[#f6f5ee]"><svg class="size-2" viewBox="0 0 8 8"><path d="M1 1l6 6M7 1L1 7" stroke="#6b6a62" stroke-width="2"/></svg></button>
          </div>
        </nav>
        <!-- tool bars -->
        <div class="flex h-7 shrink-0 gap-[2px] overflow-hidden">
          <div data-bar="new open save | print preview publish | cut copy paste brush | undo dn redo dng | pan zoom zoomw zoomp | props dc tp | help" class="flex w-[539px] shrink-0 items-center border-r border-b border-l border-r-[#aca899] border-b-[#aca899] border-l-white pt-[2px]"></div>
          <div data-bar="tstyle" class="flex w-[268px] shrink-0 items-center border-r border-b border-l border-r-[#aca899] border-b-[#aca899] border-l-white pt-[2px]">
            <div class="relative h-[22px] w-[100px]"><select aria-label="Text style" class="h-full w-full appearance-none border border-[#7f9db9] bg-white pl-1"><option>Standard</option></select><span data-drop></span></div>
            <span class="mx-[2px] h-[22px] w-[2px] border-r border-l border-r-white border-l-[#c5c2b2]"></span>
            <button aria-label="Dimension style" class="flex w-[23px] justify-center"><svg class="size-4"><use href="#dstyle"/></svg></button>
            <div class="relative h-[22px] w-[100px]"><select aria-label="Dimension style name" class="h-full w-full appearance-none border border-[#7f9db9] bg-white pl-1"><option>ISO-25</option></select><span data-drop></span></div>
          </div>
          <div data-bar="m1 m2 | m3 m4 | m5 m6 | m7 | m8 m9 | globe globe2" class="flex shrink-0 items-center border-r border-b border-l border-r-[#aca899] border-b-[#aca899] border-l-white pt-[2px] pr-[3px]"></div>
          <div data-bar="t1 t2 t3 t4 t5 t6" class="flex shrink-0 items-center border-r border-b border-l border-r-[#aca899] border-b-[#aca899] border-l-white pt-[2px] pr-[3px]"></div>
          <div data-bar="c1 c2 c3 cls" class="flex shrink-0 items-center border-b border-l border-b-[#aca899] border-l-white pt-[2px]"></div>
        </div>
        <div class="flex h-7 shrink-0 gap-[2px] overflow-hidden border-t border-white">
          <div data-bar="layers" class="flex w-[385px] shrink-0 items-center border-r border-b border-l border-r-[#aca899] border-b-[#aca899] border-l-white pt-px">
            <div class="relative ml-px flex h-[22px] w-[299px] items-center border border-[#7f9db9] bg-white pl-[3px]">
              <svg class="size-4"><use href="#bulb"/></svg><svg class="size-4"><use href="#sun"/></svg><svg class="size-4"><use href="#vp"/></svg><svg class="ml-[2px] size-4"><use href="#lock"/></svg>
              <span class="block size-[11px] border border-black"></span>
              <select aria-label="Layer" class="h-full flex-1 appearance-none pl-[6px]"><option>0</option></select><span data-drop></span>
            </div>
            <button aria-label="Make layer current" class="flex w-[23px] justify-center"><svg class="size-4"><use href="#laycur"/></svg></button>
            <button aria-label="Layer previous" class="flex w-[23px] justify-center"><svg class="size-4"><use href="#layprev"/></svg></button>
          </div>
          <div data-bar="" class="flex w-[589px] shrink-0 items-center border-r border-b border-l border-r-[#aca899] border-b-[#aca899] border-l-white pt-px">
            <div class="relative flex h-[22px] w-[151px] items-center border border-[#7f9db9] bg-white pl-[6px]"><span class="block size-[11px] border border-black"></span><select aria-label="Color" class="h-full flex-1 appearance-none pl-1"><option>ByLayer</option></select><span data-drop></span></div>
            <span class="mx-[2px] h-[22px] w-[2px] border-r border-l border-r-white border-l-[#c5c2b2]"></span>
            <div class="relative flex h-[22px] w-[160px] items-center border border-[#7f9db9] bg-white pl-1"><span class="block h-px w-[60px] bg-black"></span><select aria-label="Linetype" class="h-full flex-1 appearance-none pl-[5px]"><option>ByLayer</option></select><span data-drop></span></div>
            <span class="mx-[2px] h-[22px] w-[2px] border-r border-l border-r-white border-l-[#c5c2b2]"></span>
            <div class="relative flex h-[22px] w-[125px] items-center border border-[#7f9db9] bg-white pl-1"><span class="block h-px w-[35px] bg-black"></span><select aria-label="Lineweight" class="h-full flex-1 appearance-none pl-[5px]"><option>ByLayer</option></select><span data-drop></span></div>
            <span class="mx-[2px] h-[22px] w-[2px] border-r border-l border-r-white border-l-[#c5c2b2]"></span>
            <div class="relative h-[22px] w-[121px]"><select disabled aria-label="Plot style" class="h-full w-full appearance-none border border-[#c9c7ba] pl-[10px] text-[#aca899] opacity-100"><option>ByColor</option></select><svg class="pointer-events-none absolute top-[3px] right-px size-4 opacity-30"><use href="#chevD"/></svg></div>
          </div>
          <div data-bar="p1 p2 p3 | p4 p5 p6 p7" class="flex shrink-0 items-center border-r border-b border-l border-r-[#aca899] border-b-[#aca899] border-l-white pt-px pr-[3px]"></div>
          <div data-bar="d1 d2 | d3 d4 | s1 s2 s3 |" class="flex shrink-0 items-center border-b border-l border-b-[#aca899] border-l-white pt-px"></div>
        </div>

        <!-- work area -->
        <div class="flex min-h-0 flex-1 border-t-2 border-b-2 border-t-[#7f9db9] border-b-white">
          <!-- project palette -->
          <aside class="flex w-[252px] shrink-0 border-r border-[#aca899]">
            <div class="flex w-[222px] flex-col bg-[#efeeea] pr-px pb-[11px] pl-[6px]">
              <div class="flex h-[29px] items-start gap-1 pt-[4px]">
                <span class="mt-[2px] block h-[6px] flex-1 border-t border-b border-[#aca899] bg-white"></span>
                <button aria-label="Close palette" class="flex size-[11px] items-center justify-center border border-white border-r-[#1a3c6e] border-b-[#1a3c6e]"><svg class="size-[7px]" viewBox="0 0 7 7"><path d="M0 0l7 7M7 0L0 7" stroke="#000" stroke-width="1.600"/></svg></button>
              </div>
              <ul id="tree" class="relative flex-1 border border-[#cfcdc3] bg-white"></ul>
            </div>
            <div class="flex flex-1 flex-col pr-[6px] pl-[5px]">
              <button class="flex h-[138px] items-center justify-center rounded-r border-t border-r border-[#aca899] bg-[#efeeea] font-bold"><span class="rotate-180 [writing-mode:vertical-rl]">Project</span></button>
              <button class="flex h-[138px] items-center justify-center rounded-r border border-[#aca899]"><span class="rotate-180 [writing-mode:vertical-rl]">Thematic</span></button>
            </div>
          </aside>
          <div class="w-[3px] shrink-0 border-r border-l border-r-white border-l-black"></div>
          <div class="w-[26px] shrink-0 pr-[2px]"><div data-col="w1 w2 w3 w4 w5 w6 w7 w8 w9 w10 w11 w12 w13 w14 w15 w16 w17" class="flex flex-col items-center border-r border-b border-[#aca899] pt-[3px] pb-[6px]"></div></div>
          <!-- drawing -->
          <main class="flex min-w-0 flex-1 flex-col border-l border-[#77746a]">
            <div class="flex min-h-0 flex-1">
              <div class="relative min-w-0 flex-1 bg-black">
                <svg class="size-full" shape-rendering="crispEdges">
                  <path d="M212 239.500h68M246.500 206v68" stroke="#fff"/><path d="M243.500 236.500h6v6h-6z" fill="none" stroke="#fff"/>
                  <circle cx="480.500" cy="237" r="28" fill="#fff"/><path d="M508 236.500h193" stroke="#fff"/>
                </svg>
                <svg class="absolute bottom-0 left-0 h-[110px] w-[110px]" viewBox="0 0 110 110"><path d="M14.500 47v42M19 94.500h42M9.500 89.500h9v9h-9zM14.500 36l-4 12h8zM72 94.500l-11-4v8z" fill="none" stroke="#fff"/><path d="M14.500 38l2 9M71 94.500l-9 1" stroke="#999"/><path d="M12 15l4.500 6L21 15M16.500 21v6M84 89l7 11M91 89l-7 11" fill="none" stroke="#fff"/></svg>
              </div>
              <div class="flex w-[17px] shrink-0 flex-col items-center justify-between bg-linear-to-r from-[#f3f1ec] to-white">
                <button data-sb="U" aria-label="Scroll up"></button>
                <span class="flex-[340]"></span><span data-thumb="v"></span><span class="flex-[101]"></span>
                <button data-sb="D" aria-label="Scroll down"></button>
              </div>
            </div>
            <div class="flex h-4 shrink-0 pr-[17px]">
              <div class="flex w-[73px]">
                <button aria-label="First layout" class="flex w-[18px] items-center justify-center border border-white border-r-[#aca899] border-b-[#aca899]"><svg class="size-[10px] shrink-0" viewBox="0 0 10 10"><path d="M8 1v8L4 5zM1 1h1v8H1z"/></svg></button>
                <button aria-label="Previous layout" class="flex w-[18px] items-center justify-center border border-white border-r-[#aca899] border-b-[#aca899]"><svg class="size-[10px] shrink-0" viewBox="0 0 10 10"><path d="M7 1v8L3 5z"/></svg></button>
                <button aria-label="Next layout" class="flex w-[18px] items-center justify-center border border-white border-r-[#aca899] border-b-[#aca899]"><svg class="size-[10px] shrink-0" viewBox="0 0 10 10"><path d="M3 1v8l4-4z"/></svg></button>
                <button aria-label="Last layout" class="flex w-[18px] items-center justify-center border border-white border-r-[#aca899] border-b-[#aca899]"><svg class="size-[10px] shrink-0" viewBox="0 0 10 10"><path d="M2 1v8l4-4zM8 1h1v8H8z"/></svg></button>
              </div>
              <button class="relative w-[48px] pl-px leading-[14px] text-white"><svg class="absolute inset-0 size-full" viewBox="0 0 48 16" preserveAspectRatio="none"><path d="M2 0l6 15.500h34L48 0z" stroke="#000"/></svg><span class="relative">Model</span></button>
              <button class="relative w-[50px] leading-[14px]"><svg class="absolute inset-0 size-full" viewBox="0 0 50 16" preserveAspectRatio="none"><path d="M0 9l2 6.500h42L50 0" fill="none" stroke="#000"/></svg><span class="relative">Layout1</span></button>
              <button class="relative w-[51px] leading-[14px]"><svg class="absolute inset-0 size-full" viewBox="0 0 51 16" preserveAspectRatio="none"><path d="M0 9l2 6.500h43L51 0" fill="none" stroke="#000"/></svg><span class="relative">Layout2</span></button>
              <span class="flex-1"></span>
              <div class="flex w-[350px] bg-linear-to-b from-[#f3f1ec] to-white">
                <span class="block w-[5px] rounded-[2px] border border-[#cfcdc3] bg-[#ece9d8]"></span>
                <button data-sb="L" aria-label="Scroll left"></button><span class="flex-[158]"></span><span data-thumb="h"></span><span class="flex-[137]"></span><button data-sb="R" aria-label="Scroll right"></button>
              </div>
            </div>
          </main>
          <div class="w-[3px] shrink-0 border-r border-l border-r-white border-l-white"></div>
          <div class="w-[25px] shrink-0 pr-px"><div data-col="e1 e2 e3 e4 e5 e6 e7 e8 e9 e10 e11 e12 e13 e14 e15 e16" class="flex flex-col items-center border-b border-l border-b-[#aca899] border-l-[#aca899] pt-[3px] pb-[6px]"></div></div>
        </div>

        <!-- command window -->
        <section class="mt-[4px] flex h-[87px] shrink-0 border-t border-t-black pt-[5px] pr-2 pb-[2px] pl-[6px]" aria-label="Command window">
          <div class="mr-[3px] flex w-2 gap-[2px] pt-1"><span class="w-[3px] border border-white border-r-[#aca899] border-b-[#aca899]"></span><span class="w-[3px] border border-white border-r-[#aca899] border-b-[#aca899]"></span></div>
          <div class="flex min-w-0 flex-1 flex-col border-t-2 border-l-2 border-t-[#333] border-l-[#333] bg-white font-['Liberation_Mono',monospace] text-[13px] leading-[13px]">
            <div class="flex h-[61px] border-b border-[#aca899]">
              <pre class="flex-1 pt-px font-['Liberation_Mono',monospace]">Command: line
Specify first point:
Specify next point or [Undo]: 4
Specify next point or [Undo]: *Cancel*</pre>
              <div class="flex w-4 flex-col bg-[#f6f5f0]"><button data-sb="U" aria-label="Scroll history up"></button><span class="flex-1"></span><span data-thumb="v"></span><button data-sb="D" aria-label="Scroll history down"></button></div>
            </div>
            <div class="flex flex-1 items-center">
              <label for="cmd" class="pt-[2px]">Command:</label><input id="cmd" class="min-w-0 flex-1 pl-2 outline-none">
              <div class="flex h-full w-[67px] bg-[#f6f5f0]"><button data-sb="L" aria-label="Scroll command left"></button><span data-thumb="h"></span><span class="flex-1"></span><button data-sb="R" aria-label="Scroll command right"></button></div>
              <span class="h-full w-[17px] bg-[#ece9d8]"></span>
            </div>
          </div>
        </section>

        <!-- status bar -->
        <footer class="flex h-[23px] shrink-0 items-center border-t border-[#aca899] bg-linear-to-b from-[#d8d5c6] via-[#f3f1e6] via-20% to-[#ece9d8] pt-px pr-[2px] pl-[5px] font-['Liberation_Sans',sans-serif] text-[11px] whitespace-nowrap">
          <span class="mr-1 h-[18px] w-[238px] border border-[#aca899] border-r-white border-b-white">960.6081, 581.9005, 0.0000</span>
          <div id="status" class="flex flex-1 gap-1"></div>
          <button aria-label="Communication center" class="flex h-[18px] w-6 items-center justify-center border border-[#aca899] border-r-white border-b-white"><svg class="size-4" viewBox="0 0 16 16"><path d="M2 1l6-1 3 6-4 3zM2 14h6L6 9z" fill="#8ea3bd" stroke="#345"/><path d="M10 5l6 10H5z" fill="#ffe81c" stroke="#8a7400"/><path d="M10.500 8.500v3M10.500 12.500v1.500" stroke="#000" stroke-width="1.500"/></svg></button>
          <button aria-label="Status bar menu" class="flex w-[18px] justify-center"><svg class="mt-1 size-2" viewBox="0 0 8 8"><path d="M0 2h8L4 6z"/></svg></button>
          <svg class="size-3 self-end" viewBox="0 0 12 12"><path d="M9 1h2v2H9zM5 5h2v2H5zM9 5h2v2H9zM1 9h2v2H1zM5 9h2v2H5zM9 9h2v2H9z" fill="#b8b4a2"/></svg>
        </footer>
      </div>
    </div>
  </div>

  <!-- task bar -->
  <div class="flex h-[30px] shrink-0 bg-linear-to-b from-[#3f8cf0] via-[#245edb] via-15% to-[#1f55cf] text-white">
    <button class="mr-[10px] flex w-[97px] items-center rounded-r-xl bg-linear-to-b from-[#5fb55d] via-[#379437] via-25% to-[#2f8a2f] pl-[10px] shadow-[inset_-3px_0_4px_#1d641d]"><svg class="size-[19px]"><use href="#flag"/></svg><span class="ml-1 text-[17px] font-bold italic [text-shadow:1px_1px_1px_#1a4a1a]">start</span></button>
    <div id="tasks" class="flex flex-1 gap-[2px] pt-[3px] pb-[2px]"></div>
    <button class="mr-[18px] self-center bg-[#316ac5] px-px" aria-label="Input language English">EN</button>
    <div class="flex w-[129px] items-center border-l border-[#0a4fa0] bg-linear-to-b from-[#18b4f2] via-[#1290e8] via-20% to-[#0f8ae4]">
      <button aria-label="Show hidden icons" class="-ml-[9px] flex size-[18px] items-center justify-center rounded-full border border-[#7fc4fa] bg-[#1567d2]"><svg class="size-3" viewBox="0 0 12 12"><path d="M7.500 2.500L4 6l3.500 3.500" stroke="#fff" stroke-width="2" fill="none"/></svg></button>
      <div class="ml-px flex gap-[2px]"><svg class="size-4"><use href="#y1"/></svg><svg class="size-4"><use href="#y2"/></svg><svg class="size-4"><use href="#y3"/></svg><svg class="size-4"><use href="#y4"/></svg></div>
      <time class="ml-[10px]">9:55</time>
    </div>
  </div>
</div>

<script>
const $$ = s => document.querySelectorAll(s);
const icon = n => `<svg class="size-4 shrink-0"><use href="#${n}"/></svg>`;
const sep = '<span class="mx-[2px] h-[22px] w-[2px] shrink-0 border-r border-l border-r-white border-l-[#c5c2b2]"></span>';
const labels = {new:'New',open:'Open',save:'Save',print:'Plot',preview:'Plot preview',publish:'Publish',cut:'Cut',copy:'Copy',paste:'Paste',brush:'Match properties',undo:'Undo',redo:'Redo',pan:'Pan',zoom:'Zoom realtime',zoomw:'Zoom window',zoomp:'Zoom previous',help:'Help'};
$$('[data-bar]').forEach(bar => {
  const grip = '<span class="mr-[3px] ml-[2px] flex h-[24px] w-[6px] shrink-0 gap-[1px]"><span class="w-[3px] border-r border-l border-r-[#aca899] border-l-white"></span><span class="w-[3px] border-r border-l border-r-[#aca899] border-l-white"></span></span>';
  const items = bar.dataset.bar.split(' ').filter(Boolean).map(n =>
    n === '|' ? sep :
    n.startsWith('dn') ? `<button aria-label="More" class="flex w-[14px] shrink-0 justify-center overflow-hidden">${icon(n)}</button>` :
    `<button aria-label="${labels[n] || n}" class="flex w-[23px] shrink-0 justify-center">${icon(n)}</button>`).join('');
  bar.insertAdjacentHTML('afterbegin', grip + items);
});
$$('[data-col]').forEach(col => {
  col.innerHTML = '<span class="flex h-[6px] w-5 flex-col gap-px"><span class="h-[3px] border-t border-b border-t-white border-b-[#aca899]"></span><span class="h-[3px] border-t border-b border-t-white border-b-[#aca899]"></span></span>' +
    col.dataset.col.split(' ').map(n => `<button aria-label="Tool ${n}" class="flex h-[22px] w-[22px] shrink-0 items-center justify-center">${icon(n)}</button>`).join('');
});
$$('[data-drop]').forEach(d => {
  d.outerHTML = '<span class="pointer-events-none absolute top-[2px] right-[2px] flex h-[18px] w-[15px] items-center justify-center rounded-[2px] bg-linear-to-b from-[#d3e0ff] to-[#b3c8f5]"><svg class="size-4 shrink-0"><use href="#chevD"/></svg></span>';
});
$$('[data-sb]').forEach(b => {
  b.className = 'flex size-4 shrink-0 items-center justify-center rounded-[3px] border border-[#9db5e6] bg-linear-to-br from-[#dce7ff] to-[#b5c9f7]';
  b.innerHTML = `<svg class="size-4 shrink-0"><use href="#chev${b.dataset.sb}"/></svg>`;
});
$$('[data-thumb]').forEach(t => {
  t.className = 'flex size-4 shrink-0 items-center justify-center rounded-[3px] border border-[#9db5e6] bg-[#c4d5fc]';
  t.innerHTML = t.dataset.thumb === 'v'
    ? '<svg class="size-2" viewBox="0 0 8 8"><path d="M0 .5h8M0 2.500h8M0 4.500h8M0 6.500h8" stroke="#8caeee"/></svg>'
    : '<svg class="size-2" viewBox="0 0 8 8"><path d="M.5 0v8M2.500 0v8M4.500 0v8M6.500 0v8" stroke="#8caeee"/></svg>';
});
document.getElementById('menu').innerHTML = ['File','Edit','View','Insert','Format','Tools','Draw','Dimension','Modify','Window','Map','Help']
  .map(m => `<button class="mr-[9px]">${m}</button>`).join('');

const box = () => `<svg class="size-[9px] shrink-0" viewBox="0 0 9 9"><path d="M.5.500h8v8h-8z" fill="#f4f2ea" stroke="#7b9ebd"/><path d="M2 4.500h5" stroke="#000"/></svg>`;
const dots = '<span class="h-px flex-1 border-t border-dotted border-[#aca899]"></span>';
const folder = '<svg class="h-3 w-[15px] shrink-0"><use href="#folder"/></svg>';
const rows = [
  ['Project [Drawing1.dwg]', 0], ['Drawings', 1], ['Query Library', 1, true], ['Current Query', 2],
  ['Feature Classes', 1, true], ['Undefined Classes', 2], ['Data Sources', 1], ['Topologies', 1], ['Link Templates', 1]
];
document.getElementById('tree').innerHTML =
  '<li aria-hidden="true" class="absolute top-4 left-[31px] h-[120px] border-l border-dotted border-[#aca899]"></li>' +
  rows.map(([t, d, b]) => {
    if (d === 0) return `<li class="flex h-4 items-center pl-2">${box()}<svg class="ml-[7px] size-4"><use href="#world"/></svg><span class="ml-px bg-[#ece9d8] px-[2px]">${t}</span></li>`;
    if (d === 1) return `<li class="relative flex h-4 items-center"><span class="flex w-[43px] shrink-0 items-center ${b ? 'pl-[27px]' : 'pl-[31px]'}">${b ? box() : ''}${dots}</span>${folder}<span class="ml-1">${t}</span></li>`;
    return `<li class="flex h-4 items-center"><span class="ml-[50px] h-4 w-[11px] shrink-0"><span class="block h-2 border-b border-l border-dotted border-[#aca899]"></span></span>${t[0] === 'C' ? '<svg class="h-[14px] w-4 shrink-0"><use href="#query"/></svg>' : '<svg class="size-4 shrink-0" viewBox="0 0 16 16"><path d="M4 5c0-5 8-5 8 0 0 3-4 3-4 6" stroke="#a0a0a0" stroke-width="3" fill="none"/><path d="M12 5c0 3-3 3-3 6M8.500 13v3" stroke="#111" stroke-width="2" fill="none"/></svg>'}<span class="ml-1">${t}</span></li>`;
  }).join('');

document.getElementById('status').innerHTML = [['SNAP',33,0],['GRID',31,0],['ORTHO',43,1],['POLAR',40,0],['OSNAP',41,1],['OTRACK',48,1],['LWT',28,0],['MODEL',42,1]]
  .map(([t, w, on]) => `<button style="width:${w}px" aria-pressed="${!!on}" class="${on ? 'h-[18px] border border-black border-r-white border-b-white pt-px text-center leading-4' : 'h-[18px] border border-white border-r-[#aca899] border-b-[#aca899] text-center leading-4'}"><span class="flex justify-center">${t}</span></button>`).join('');

document.getElementById('tasks').innerHTML = [['yfold','AutoCAD'],['foxit','minggu 6.pdf - Foxit ...'],['alogo','Autodesk Map - [Dra...',1],['paint','untitled - Paint'],['word','Document1 - Microsof...']]
  .map(([i, t, on]) => `<button class="${on ? 'flex w-[158px] items-center gap-[3px] rounded-[3px] bg-[#1c50b4] pl-[10px] shadow-[inset_1px_1px_2px_#0c2f80]' : 'flex w-[158px] items-center gap-[3px] rounded-[3px] bg-[#3c81f3] pl-[9px] shadow-[inset_1px_1px_1px_#6aa2fa,inset_-1px_-1px_1px_#2f68d4]'}">${icon(i)}<span class="whitespace-nowrap">${t}</span></button>`).join('');
</script>
</body>
</html>
